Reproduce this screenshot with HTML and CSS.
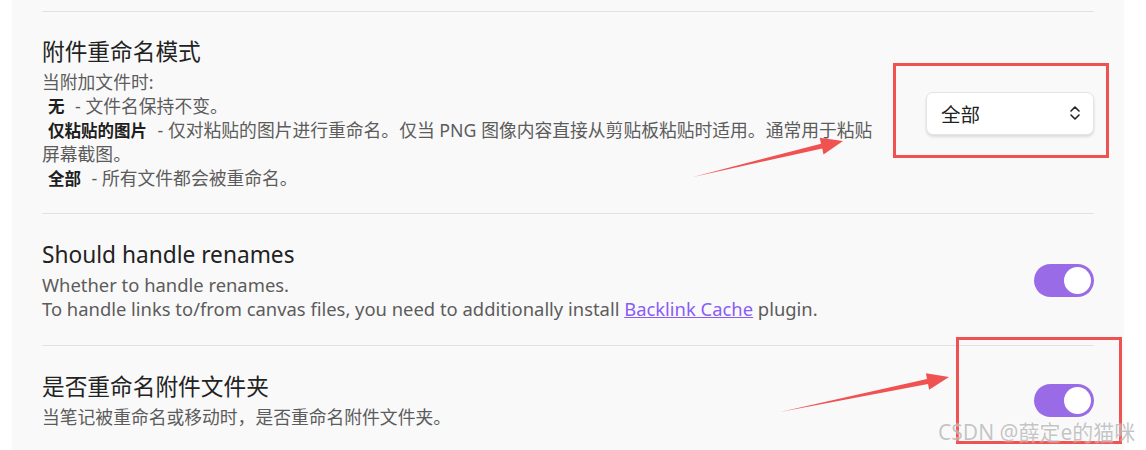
FILE: index.html
```html
<!DOCTYPE html>
<html lang="zh-CN">
<head>
    <meta charset="UTF-8">
    <meta name="viewport" content="width=device-width, initial-scale=1.0">
    <title>附件设置</title>
    <link rel="stylesheet" href="styles.css">
</head>
<body class="body">

<div class="settings">
    <!-- Rename mode -->
    <div class="setting-item">
        <div class="setting-info">
            <div class="setting-name">附件重命名模式</div>
            <div class="setting-desc">
                当附加文件时:<br>
                <span class="opt">无</span> - 文件名保持不变。<br>
                <span class="opt">仅粘贴的图片</span> - 仅对粘贴的图片进行重命名。仅当 PNG 图像内容直接从剪贴板粘贴时适用。通常用于粘贴屏幕截图。<br>
                <span class="opt">全部</span> - 所有文件都会被重命名。
            </div>
        </div>
        <div class="setting-control">
            <div class="dropdown">
                <span>全部</span>
                <svg class="chevrons" width="12" height="16" viewBox="0 0 12 16">
                    <path d="M2 6 L6 2 L10 6 M2 10 L6 14 L10 10" fill="none" stroke="#222" stroke-width="1.6" stroke-linecap="round" stroke-linejoin="round"/>
                </svg>
            </div>
        </div>
    </div>

    <!-- Handle renames -->
    <div class="setting-item">
        <div class="setting-info">
            <div class="setting-name">Should handle renames</div>
            <div class="setting-desc en">
                Whether to handle renames.<br>
                To handle links to/from canvas files, you need to additionally install <a class="link" href="#">Backlink Cache</a> plugin.
            </div>
        </div>
        <div class="setting-control">
            <div class="toggle on"><span class="knob"></span></div>
        </div>
    </div>

    <!-- Rename folder -->
    <div class="setting-item">
        <div class="setting-info">
            <div class="setting-name">是否重命名附件文件夹</div>
            <div class="setting-desc">当笔记被重命名或移动时，是否重命名附件文件夹。</div>
        </div>
        <div class="setting-control">
            <div class="toggle on"><span class="knob"></span></div>
        </div>
    </div>
</div>

<!-- annotations drawn over the screenshot -->
<svg class="marks" width="1146" height="450" viewBox="0 0 1146 450">
    <rect x="894.5" y="64.5" width="213" height="92" fill="none" stroke="#f05252" stroke-width="3"/>
    <rect x="957.5" y="338.5" width="163" height="104" fill="none" stroke="#f05252" stroke-width="3"/>
    <polygon points="693,177 822.2,148.5 823.5,154.5 843,141 819.7,137.8 821,143.7" fill="#f05252"/>
    <polygon points="780,412 928,383.9 929.1,389.8 949,377 925.9,373.2 927,379.1" fill="#f05252"/>
</svg>
<div class="watermark">CSDN @薛定e的猫咪</div>

</body>
</html>
```

FILE: styles.css
```css
/* CSS */
.body {
    margin: 0;
    background: #fff;
    font-family: "Noto Sans", "Noto Sans CJK SC", sans-serif;
    position: relative;
    height: 450px;
    overflow: hidden;
}

.settings {
    margin-left: 12px;
    width: 1112px;
    height: 450px;
    box-sizing: border-box;
    padding: 11px 30px 0;
    background: #f9f9f9;
}

.setting-item {
    display: flex;
    align-items: center;
    padding: 24px 0 23px;
    border-top: 1px solid #e2e2e2;
}

.setting-item + .setting-item {
    padding: 25px 0 24px;
}

.setting-info {
    flex: 1;
    margin-right: 40px;
}

.setting-name {
    font-size: 22.7px;
    line-height: 32px;
    color: #222;
}

.setting-desc {
    margin-top: 2px;
    font-size: 17.8px;
    line-height: 24px;
    color: #5c5c5c;
}

.setting-desc.en {
    font-size: 18.4px;
}

.opt {
    padding: 0 6px;
    font-size: 16.5px;
    line-height: 1;
    font-weight: bold;
    color: #1e1e1e;
}

.link {
    color: #8a5cf5;
    text-decoration: underline;
}

.setting-control {
    display: flex;
    justify-content: flex-end;
}

.dropdown {
    width: 168px;
    height: 43px;
    box-sizing: border-box;
    display: flex;
    align-items: center;
    justify-content: space-between;
    padding: 0 12px 0 14px;
    background: #fff;
    border: 1px solid #e4e4e4;
    border-radius: 7px;
    box-shadow: 0 2px 3px rgba(0,0,0,0.12);
    font-size: 19.5px;
    color: #222;
}

.toggle {
    width: 60px;
    height: 33px;
    box-sizing: border-box;
    padding: 3px;
    border-radius: 17px;
    background: #d0d0d0;
    display: flex;
}

.toggle.on {
    background: #9a6be6;
    justify-content: flex-end;
}

.knob {
    width: 27px;
    height: 27px;
    border-radius: 50%;
    background: #fff;
}

.marks {
    position: absolute;
    left: 0;
    top: 0;
    pointer-events: none;
}

.watermark {
    position: absolute;
    left: 938px;
    top: 416px;
    font-size: 21px;
    color: rgba(140,140,140,0.5);
    text-shadow: 0 0 2px #fff;
    white-space: nowrap;
}
```
